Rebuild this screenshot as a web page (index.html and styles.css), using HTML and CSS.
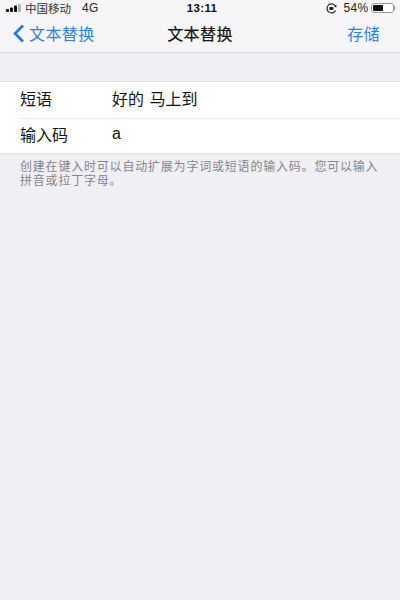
FILE: index.html
```html
<!DOCTYPE html>
<html lang="zh-CN">
<head>
    <meta charset="UTF-8">
    <title>文本替换</title>
    <link rel="stylesheet" href="styles.css">
</head>
<body>
    <div class="top-bar">
        <div class="status-bar">
            <div class="status-left">
                <svg class="signal" width="16" height="8" viewBox="0 0 16 8">
                    <rect x="0" y="5" width="3" height="3" rx="0.8" fill="#111"/>
                    <rect x="4" y="3.5" width="3" height="4.5" rx="0.8" fill="#111"/>
                    <rect x="8" y="1.5" width="3" height="6.5" rx="0.8" fill="#111"/>
                    <rect x="12" y="0" width="3" height="8" rx="0.8" fill="#b4b4b4"/>
                </svg>
                <span class="carrier">中国移动</span>
                <span class="network">4G</span>
            </div>
            <div class="status-time">13:11</div>
            <div class="status-right">
                <svg class="lock" width="11" height="11" viewBox="0 0 11 11">
                    <path d="M9.6 7.4A4.5 4.5 0 1 1 9.6 3.4" fill="none" stroke="#222" stroke-width="1.2"/>
                    <path d="M8 3.6L10.4 4.4L10.4 1.8Z" fill="#222"/>
                    <rect x="3.4" y="4" width="4" height="3" rx="0.5" fill="#222"/>
                </svg>
                <span class="percent">54%</span>
                <div class="battery"><div class="battery-fill"></div></div>
                <div class="battery-cap"></div>
            </div>
        </div>
        <div class="nav-bar">
            <div class="nav-back">
                <svg width="13" height="19" viewBox="0 0 13 19">
                    <path d="M11 1.5L3 9.5L11 17.5" fill="none" stroke="#1a76f0" stroke-width="2.5"/>
                </svg>
                <span>文本替换</span>
            </div>
            <div class="nav-title">文本替换</div>
            <div class="nav-save">存储</div>
        </div>
    </div>

    <div class="form-list">
        <div class="form-row">
            <span class="row-label">短语</span>
            <span class="row-value">好的 马上到</span>
        </div>
        <div class="form-row">
            <span class="row-label">输入码</span>
            <span class="row-value">a</span>
        </div>
    </div>

    <p class="hint">创建在键入时可以自动扩展为字词或短语的输入码。您可以输入<br>拼音或拉丁字母。</p>
</body>
</html>
```

FILE: styles.css
```css
body {
    margin: 0;
    width: 400px;
    height: 600px;
    overflow: hidden;
    background: #efeff4;
    color: #111;
    font-family: "Liberation Sans", "Noto Sans CJK SC", sans-serif;
}
.top-bar {
    height: 52px;
    background: #f6f6f8;
    border-bottom: 1px solid #dcdcde;
}
.status-bar {
    height: 16px;
    display: grid;
    grid-template-columns: 1fr auto 1fr;
    align-items: center;
    font-size: 11.5px;
    color: #222;
}
.status-left {
    display: flex;
    align-items: center;
    padding-left: 6px;
}
.carrier {
    margin-left: 3px;
    color: #333;
}
.network {
    margin-left: 11px;
    font-size: 12px;
    letter-spacing: 0.4px;
}
.status-time {
    padding-left: 4px;
    font-size: 11.5px;
    font-weight: bold;
    letter-spacing: 0.3px;
    color: #111;
}
.status-right {
    display: flex;
    align-items: center;
    justify-content: flex-end;
    padding-right: 5px;
}
.percent {
    margin-left: 7px;
    font-size: 12px;
    letter-spacing: 0.3px;
}
.battery {
    width: 23px;
    height: 10px;
    margin-left: 2px;
    padding: 1px;
    box-sizing: border-box;
    border: 1px solid #999;
    border-radius: 3px;
    background: #fff;
}
.battery-fill {
    width: 54%;
    height: 100%;
    border-radius: 1px;
    background: #111;
}
.battery-cap {
    width: 1.5px;
    height: 4px;
    background: #999;
}
.nav-bar {
    height: 34px;
    display: grid;
    grid-template-columns: 1fr auto 1fr;
    align-items: center;
    font-size: 16px;
    letter-spacing: 0.4px;
}
.nav-back {
    display: flex;
    align-items: center;
    gap: 4px;
    padding-left: 12px;
    color: #2f80ed;
}
.nav-title {
    color: #111;
    -webkit-text-stroke: 0.2px #111;
}
.nav-save {
    padding-right: 20px;
    text-align: right;
    color: #2f80ed;
}
.form-list {
    margin-top: 28px;
    background: #fff;
    border-top: 1px solid #e4e4e8;
    border-bottom: 1px solid #e4e4e8;
}
.form-row {
    height: 36px;
    box-sizing: border-box;
    padding-bottom: 4px;
    display: flex;
    align-items: center;
    margin-left: 20px;
    font-size: 16px;
}
.form-row + .form-row {
    height: 35px;
    border-top: 1px solid #e8e8ec;
}
.row-label {
    width: 92px;
}
.row-value {
    word-spacing: 1px;
}
.hint {
    margin: 6px 20px 0;
    font-size: 12px;
    letter-spacing: 0.8px;
    line-height: 14px;
    white-space: nowrap;
    color: #85858a;
}
```
